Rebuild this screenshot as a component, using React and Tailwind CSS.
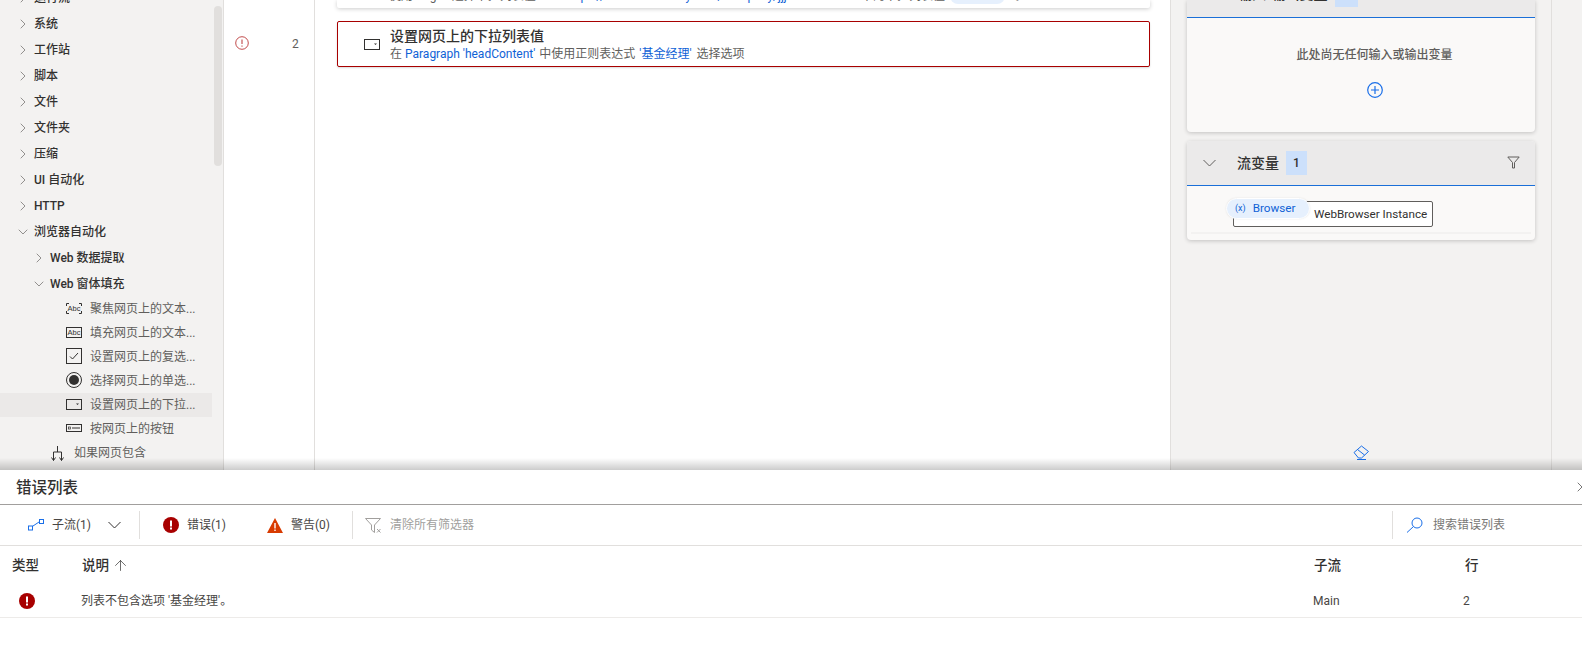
import React from "react";
import { ChevronRight, ChevronDown, ArrowUp, X } from "lucide-react";

const F = { fontFamily: 'Roboto, "Noto Sans CJK SC", sans-serif' };

function TreeRow({ label, open }) {
  return (
    <div className="h-[26px] flex items-center pl-[15px] text-[12px] font-medium text-[#323130] whitespace-nowrap">
      {open ? <ChevronDown size={16} strokeWidth={1} className="text-[#605e5c] w-[16px] shrink-0" /> : <ChevronRight size={16} strokeWidth={1} className="text-[#605e5c] w-[16px] shrink-0" />}
      <span className="ml-[3px]">{label}</span>
    </div>
  );
}

function ErrorIcon({ size = 16 }) {
  return (
    <svg width={size} height={size} viewBox="0 0 16 16"><circle cx="8" cy="8" r="8" fill="#a80000" /><rect x="7" y="3.5" width="2" height="6" fill="#fff" /><rect x="7" y="10.5" width="2" height="2" fill="#fff" /></svg>
  );
}

function Dropdown() {
  return (
    <svg width="16" height="11" viewBox="0 0 16 11" fill="none"><rect x=".5" y=".5" width="15" height="10" stroke="#323130" /><path d="M10 4.500h3l-1.500 1.500z" fill="#323130" /></svg>
  );
}

const Leaf = ({ icon, label, active }) => (
  <div className={`h-[24px] flex items-center pl-[66px] text-[12px] text-[#605e5c] whitespace-nowrap w-[212px] ${active ? "bg-[#ebe9e8]" : ""}`}>
    <span className="w-[24px] flex justify-start items-center shrink-0 -mt-[2px]">{icon}</span>
    <span>{label}</span>
  </div>
);

const AbcBox = ({ dashed }) => (
  <svg width="16" height="11" viewBox="0 0 16 11" fill="none">
    {dashed ? <path d="M3 .5H.5V3M13 .5h2.500V3M3 10.500H.5V8M13 10.500h2.500V8" stroke="#323130" /> : <rect x=".5" y=".5" width="15" height="10" stroke="#323130" />}
    <text x="8" y="8" textAnchor="middle" fontSize="7.500" fill="#323130" fontFamily="Liberation Sans">Abc</text>
  </svg>
);

export default function App() {
  return (
    <div className="w-[1582px] h-[647px] overflow-hidden flex flex-col bg-white" style={F}>
      <div className="h-[470px] flex relative overflow-hidden">
        {/* action tree */}
        <aside className="w-[224px] shrink-0 bg-[#f3f2f1] border-r border-[#e1dfdd] relative overflow-hidden">
          <div className="-mt-[15px]">
            {["运行流", "系统", "工作站", "脚本", "文件", "文件夹", "压缩", "UI 自动化", "HTTP"].map((l) => <TreeRow key={l} label={l} />)}
            <TreeRow label="浏览器自动化" open />
            <div className="pl-[16px]">
              <TreeRow label="Web 数据提取" />
              <TreeRow label="Web 窗体填充" open />
            </div>
            <Leaf label="聚焦网页上的文本..." icon={<AbcBox dashed />} />
            <Leaf label="填充网页上的文本..." icon={<AbcBox />} />
            <Leaf label="设置网页上的复选..." icon={<svg width="16" height="16" viewBox="0 0 16 16" fill="none"><rect x=".5" y=".5" width="15" height="15" stroke="#323130" /><path d="M4 8.500l2.500 2.500 5.500-6" stroke="#323130" /></svg>} />
            <Leaf label="选择网页上的单选..." icon={<svg width="16" height="16" viewBox="0 0 16 16" fill="none"><circle cx="8" cy="8" r="7.500" stroke="#323130" /><circle cx="8" cy="8" r="5" fill="#323130" /></svg>} />
            <Leaf active label="设置网页上的下拉..." icon={<Dropdown />} />
            <Leaf label="按网页上的按钮" icon={<svg width="16" height="8" viewBox="0 0 16 8" fill="none"><rect x=".5" y=".5" width="15" height="7" stroke="#323130" /><rect x="2.500" y="3" width="2" height="2" stroke="#323130" strokeWidth=".7" /><path d="M6 4h8" stroke="#323130" /></svg>} />
            <div className="h-[24px] flex items-center pl-[51px] text-[12px] text-[#605e5c] whitespace-nowrap">
              <svg className="shrink-0 mr-[10px]" width="13" height="15" viewBox="0 0 13 15" fill="none" stroke="#323130"><path d="M6.500 0v6M2.500 6h8M2.500 6v8.500M10.500 6v8.500M.5 11.500l2 3 2-3M8.500 11.500l2 3 2-3" /></svg>
              <span>如果网页包含</span>
            </div>
          </div>
          <div className="absolute left-[214px] top-[6px] w-[8px] h-[160px] rounded-[4px] bg-[#e1dfdd]" />
        </aside>

        {/* line gutter */}
        <div className="w-[91px] shrink-0 border-r border-[#e1dfdd] pt-[37px] flex items-start text-[12px] text-[#605e5c]">
          <svg className="ml-[11px] mt-[-1px]" width="14" height="14" viewBox="0 0 14 14" fill="none"><circle cx="7" cy="7" r="6.300" stroke="#a80000" strokeOpacity=".7" /><path d="M7 3.500v4.500M7 9.500v1.200" stroke="#a80000" strokeOpacity=".8" /></svg>
          <span className="ml-[43px] leading-[14px]">2</span>
        </div>

        {/* canvas */}
        <main className="w-[855px] shrink-0 relative pl-[22px] pr-[20px]">
          <div className="h-[8px] bg-white rounded-b-[2px] shadow-[0_1px_4px_rgba(0,0,0,0.2)] relative overflow-hidden">
            <div className="absolute -top-[12px] left-[52px] text-[12px] leading-[16px] text-[#605e5c] whitespace-nowrap flex items-center">
              <span className="w-[177px]">使用 Regex 选择下拉列表值</span>
              <span className="w-[295px] text-[#0f62d6]">https://fund.eastmoney.com/Company/jjjl.html</span>
              <span className="w-[89px]">中的下拉列表值</span>
              <span className="w-[55px] h-[16px] rounded-full bg-[#e6f0fd]" />
              <span className="ml-[10px]">。</span>
            </div>
          </div>
          <div className="mt-[13px] h-[46px] border border-[#a80000] rounded-[2px] shadow-[0_1px_2px_rgba(0,0,0,0.15)] flex items-center bg-white">
            <span className="ml-[26px] mr-[10px] flex"><Dropdown /></span>
            <div className="pt-[2px]">
              <div className="text-[14px] leading-[17px] font-medium text-[#323130]">设置网页上的下拉列表值</div>
              <div className="text-[12px] leading-[17px] mt-[1px] text-[#605e5c]">在 <span className="text-[#0f62d6]">Paragraph 'headContent'</span><span className="ml-[1px]"> 中使用正则表达式 </span><span className="text-[#0f62d6] mx-[1px]">'基金经理'</span> <span className="ml-[1px]">选择选项</span></div>
            </div>
          </div>
        </main>

        {/* variables */}
        <section className="w-[382px] shrink-0 bg-[#f3f2f1] border-l border-r border-[#e1dfdd] relative px-[16px]">
          <div className="bg-[#faf9f8] rounded-b-[4px] shadow-[0_1px_4px_rgba(0,0,0,0.2)] h-[132px]">
            <div className="h-[18px] bg-[#ebeaea] border-b border-[#1a6fd8] relative overflow-hidden">
              <span className="absolute left-[51px] -top-[16px] text-[14px] font-medium text-[#323130] leading-[20px] whitespace-nowrap">输入/输出变量</span>
              <span className="absolute left-[148px] top-0 w-[23px] h-[7px] bg-[#cce0fb]" />
            </div>
            <div className="pl-[27px] text-center text-[12px] font-medium text-[#605e5c] pt-[29px] leading-[16px]">此处尚无任何输入或输出变量</div>
            <div className="pl-[27px] flex justify-center mt-[19px]">
              <svg width="16" height="16" viewBox="0 0 16 16" fill="none" stroke="#1a6fe8" strokeWidth="1.200"><circle cx="8" cy="8" r="7.300" /><path d="M8 4v8M4 8h8" /></svg>
            </div>
          </div>
          <div className="mt-[9px] bg-[#faf9f8] rounded-[4px] shadow-[0_1px_4px_rgba(0,0,0,0.2)] h-[99px]">
            <div className="h-[45px] bg-[#ebeaea] rounded-t-[4px] border-b border-[#1a6fd8] flex items-center relative">
              <svg className="ml-[16px]" width="13" height="8" viewBox="0 0 13 8" fill="none" stroke="#605e5c"><path d="M.5 1l6 6 6-6" /></svg>
              <span className="ml-[21px] text-[14px] font-medium text-[#323130]">流变量</span>
              <span className="ml-[7px] w-[21px] h-[24px] bg-[#cce0fb] flex items-center justify-center text-[12px] font-medium text-[#323130]">1</span>
              <svg className="absolute right-[15px] top-[15px]" width="13" height="13" viewBox="0 0 13 13" fill="none" stroke="#605e5c"><path d="M.8 1h11.400L7.500 6.500V12h-2V6.500z" /></svg>
            </div>
            <div className="relative h-[46px]">
              <div className="absolute left-[46px] top-[15px] w-[200px] h-[26px] border border-[#605e5c] rounded-[2px] bg-white text-[11.700px] text-[#323130] leading-[24px] pl-[80px] whitespace-nowrap">WebBrowser Instance</div>
              <div className="absolute left-[39px] top-[12px] w-[84px] h-[21px] rounded-full bg-[#e6f0fd] border border-white flex items-center shadow-[0_0_2px_rgba(0,0,0,0.1)]">
                <span className="ml-[8px] text-[9px] text-[#0f62d6] leading-none">(x)</span>
                <span className="ml-[7px] text-[11.700px] text-[#0f62d6]">Browser</span>
              </div>
              <div className="absolute left-[4px] right-[4px] bottom-[-2px] h-[2px] bg-[#f3f2f1]" />
            </div>
          </div>
          <svg className="absolute left-[182px] top-[445px]" width="16" height="15" viewBox="0 0 16 15" fill="none" stroke="#1a6fe8"><path d="M1 7.500L8.500 1 15.500 6.500 8.500 13H5.500zM4.500 4.500L11.500 10M4 14.500h9" /></svg>
        </section>
        <div className="flex-1 bg-[#f3f2f1]" />

        <div className="absolute left-0 right-0 bottom-0 h-[12px] bg-gradient-to-b from-transparent to-[rgba(0,0,0,0.2)]" />
      </div>

      {/* error list */}
      <div className="flex-1 bg-white relative">
        <div className="h-[35px] border-b border-[#a19f9d] flex items-center justify-between">
          <span className="ml-[16px] pt-[3px] text-[15.500px] font-medium text-[#323130]">错误列表</span>
          <X size={16} strokeWidth={1} className="mr-[-8px] text-[#323130]" />
        </div>
        <div className="h-[41px] border-b border-[#e1dfdd] flex items-center text-[12px] text-[#484644] whitespace-nowrap">
          <svg className="ml-[28px]" width="16" height="12" viewBox="0 0 16 12" fill="none" stroke="#1a6fe8"><rect x=".5" y="7" width="4" height="4" /><rect x="11.500" y=".5" width="4" height="4" /><path d="M5 7l6-4" /></svg>
          <span className="ml-[8px] w-[39px]">子流(1)</span>
          <svg className="ml-[17px]" width="13" height="8" viewBox="0 0 13 8" fill="none" stroke="#323130"><path d="M.5 1l6 6 6-6" /></svg>
          <span className="ml-[18px] w-px h-[28px] bg-[#e1dfdd]" />
          <span className="ml-[23px]"><ErrorIcon /></span>
          <span className="ml-[8px] w-[38px]">错误(1)</span>
          <svg className="ml-[42px]" width="16" height="15" viewBox="0 0 16 15"><path d="M8 0l8 15H0z" fill="#d83b01" /><rect x="7.300" y="5" width="1.400" height="5.500" fill="#fff" /><rect x="7.300" y="11.500" width="1.400" height="1.500" fill="#fff" /></svg>
          <span className="ml-[8px] w-[38px]">警告(0)</span>
          <span className="ml-[23px] w-px h-[28px] bg-[#e1dfdd]" />
          <svg className="ml-[12px]" width="17" height="15" viewBox="0 0 17 15" fill="none" stroke="#a19f9d"><path d="M.5.5h15L9.500 7v7.500L6.500 12V7zM12 11l3.500 3.500M15.500 11L12 14.500" /></svg>
          <span className="ml-[8px] text-[#a19f9d]">清除所有筛选器</span>
          <span className="ml-auto w-px h-[28px] bg-[#e1dfdd] mr-[13px]" />
          <svg className="mr-[10px]" width="17" height="16" viewBox="0 0 17 16" fill="none" stroke="#1a6fe8"><circle cx="11" cy="6" r="5" /><path d="M7.500 9.500L1 15.500" /></svg>
          <span className="mr-[77px] w-[72px] text-[#797775]">搜索错误列表</span>
        </div>
        <div className="h-[37px] pt-[2px] flex items-center text-[13.500px] font-medium text-[#323130] relative">
          <span className="ml-[12px] w-[70px]">类型</span>
          <span>说明</span>
          <ArrowUp size={17} strokeWidth={1} className="ml-[3px]" />
          <span className="absolute left-[1314px]">子流</span>
          <span className="absolute left-[1465px]">行</span>
        </div>
        <div className="h-[35px] pt-[1px] border-b border-[#edebe9] flex items-center text-[12px] text-[#484644] relative">
          <span className="ml-[19px] w-[62px] flex"><ErrorIcon /></span>
          <span>列表不包含选项 '基金经理'。</span>
          <span className="absolute left-[1313px]">Main</span>
          <span className="absolute left-[1463px]">2</span>
        </div>
      </div>
    </div>
  );
}
